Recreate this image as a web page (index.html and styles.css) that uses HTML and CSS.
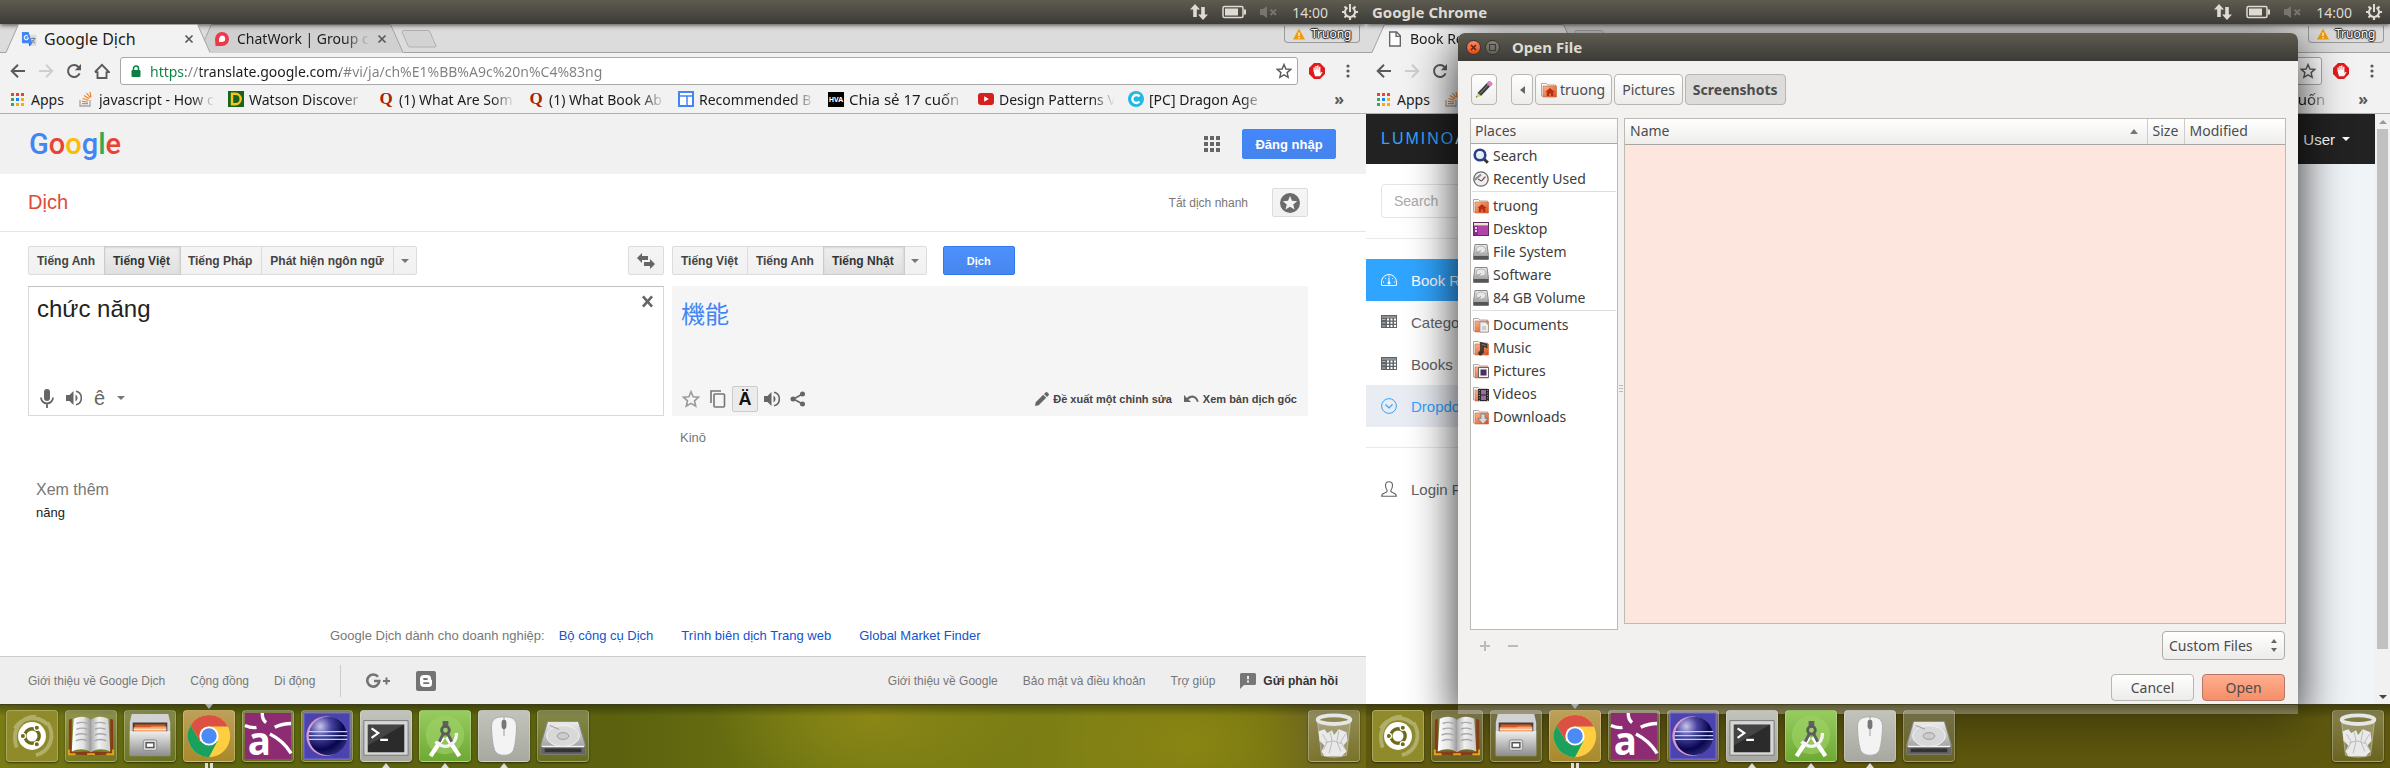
FILE: index.html
```html
<!DOCTYPE html>
<html lang="vi">
<head>
<meta charset="utf-8">
<title>Desktop</title>
<link rel="stylesheet" href="styles.css">
</head>
<body>
<svg class="defs" aria-hidden="true">
  <defs>
    <linearGradient id="metal" x1="0" y1="0" x2="0" y2="1"><stop offset="0" stop-color="#eee"/><stop offset="1" stop-color="#8c8c8c"/></linearGradient>
    <linearGradient id="orange" x1="0" y1="0" x2="1" y2="1"><stop offset="0" stop-color="#f9b98c"/><stop offset="1" stop-color="#d8481c"/></linearGradient>
    <linearGradient id="page-l" x1="0" x2="1"><stop offset="0" stop-color="#fff"/><stop offset=".6" stop-color="#e2e2e2"/><stop offset="1" stop-color="#999"/></linearGradient>
    <linearGradient id="page-r" x1="0" x2="1"><stop offset="0" stop-color="#aaa"/><stop offset=".4" stop-color="#f1f1f1"/><stop offset="1" stop-color="#ccc"/></linearGradient>
    <radialGradient id="globe" cx=".3" cy=".25" r=".8"><stop offset="0" stop-color="#c9c6ee"/><stop offset=".35" stop-color="#4a45a0"/><stop offset=".75" stop-color="#08064e"/><stop offset="1" stop-color="#2b2774"/></radialGradient>
  </defs>

  <symbol id="i-net" viewBox="0 0 18 18"><path d="M5 1L0 6.500h3.200V14h3.600V6.500H10zM13 17l5-5.500h-3.200V4h-3.600v7.500H8z" fill="#dfdbd2"/></symbol>
  <symbol id="i-battery" viewBox="0 0 24 14"><rect x="1" y="1.500" width="20" height="11" rx="1.500" fill="none" stroke="#dfdbd2" stroke-width="1.500"/><path d="M3 3.500h13v7H3zM22 4.500h2v5h-2z" fill="#dfdbd2"/></symbol>
  <symbol id="i-mute" viewBox="0 0 18 14"><path d="M0 4h3l4-3v12l-4-3H0z" fill="#77756d"/><path d="M10.500 4.500l5.500 5.500M16 4.500L10.500 10" stroke="#77756d" stroke-width="1.800"/></symbol>
  <symbol id="i-gear" viewBox="0 0 16 16"><g stroke="#dfdbd2" fill="none"><path d="M5.500 3.700a5 5 0 1 0 5 0" stroke-width="2"/><path d="M8 0v8" stroke-width="2"/><path d="M2.500 2.500l2 2M13.500 2.500l-2 2M0 8h3M13 8h3M2.500 13.500l2-2M13.500 13.500l-2-2M8 13v3" stroke-width="2.200"/></g></symbol>
  <symbol id="i-back" viewBox="0 0 16 16"><path d="M15 8H2M8 1.700L1.700 8 8 14.300" fill="none" stroke="currentColor" stroke-width="2"/></symbol>
  <symbol id="i-fwd" viewBox="0 0 16 16"><path d="M1 8h13M8 1.700L14.300 8 8 14.300" fill="none" stroke="currentColor" stroke-width="2"/></symbol>
  <symbol id="i-reload" viewBox="0 0 16 16"><path d="M13.600 10.300A6 6 0 1 1 12.500 4" fill="none" stroke="currentColor" stroke-width="2"/><path d="M15 1v6.200H8.800z" fill="currentColor"/></symbol>
  <symbol id="i-home" viewBox="0 0 16 16"><path d="M3.500 8.500V15h9V8.500M1 9L8 1.800 15 9h-2.500M1 9h2.500" fill="none" stroke="currentColor" stroke-width="1.900"/></symbol>
  <symbol id="i-lock" viewBox="0 0 10 12"><rect x="0.500" y="5" width="9" height="7" rx="1" fill="#0b8043"/><path d="M2.500 5.500V3.500a2.500 2.500 0 0 1 5 0v2" fill="none" stroke="#0b8043" stroke-width="1.500"/></symbol>
  <symbol id="i-star" viewBox="0 0 16 16"><path d="M8 1.500l1.900 4.500 4.900.4-3.700 3.200 1.100 4.800L8 11.900l-4.200 2.500 1.100-4.800L1.200 6.400 6.100 6z" fill="none" stroke="currentColor" stroke-width="1.400"/></symbol>
  <symbol id="i-adblock" viewBox="0 0 16 16"><path d="M5 0h6l5 5v6l-5 5H5l-5-5V5z" fill="#df1c1c"/><path d="M4.500 8V4.500h1.300V7h.5V3h1.400v3.500h.5V2.600h1.400v4h.5V3.800h1.300V10l1.300-1.300.8.6-2.500 4H6z" fill="#fff"/></symbol>
  <symbol id="i-dots" viewBox="0 0 4 14"><circle cx="2" cy="2" r="1.600" fill="#5a5a5a"/><circle cx="2" cy="7" r="1.600" fill="#5a5a5a"/><circle cx="2" cy="12" r="1.600" fill="#5a5a5a"/></symbol>
  <symbol id="i-warn" viewBox="0 0 12 11"><path d="M6 0l6 11H0z" fill="#f59b0b"/><path d="M6 4v3.500M6 8.500V10" stroke="#fff" stroke-width="1.300"/></symbol>
  <symbol id="i-close" viewBox="0 0 10 10"><path d="M1.500 1.500l7 7M8.500 1.500l-7 7" stroke="#5a5a5a" stroke-width="1.700"/></symbol>
  <symbol id="i-clear" viewBox="0 0 10 10"><path d="M1.500 1l7 8M8.500 1l-7 8" stroke="#666" stroke-width="2"/></symbol>
  <symbol id="i-apps" viewBox="0 0 13 13"><path d="M0 0h3v3H0zM5 0h3v3H5zM10 0h3v3h-3z" fill="#ea4335"/><path d="M0 5h3v3H0zM0 10h3v3H0z" fill="#34a853"/><path d="M5 5h3v3H5z" fill="#1a85f0"/><path d="M10 5h3v3h-3zM5 10h3v3H5zM10 10h3v3h-3z" fill="#fbab04"/></symbol>
  <symbol id="i-stack" viewBox="0 0 16 16"><path d="M2 9v6h10V9" fill="none" stroke="#9fa6ad" stroke-width="1.300"/><path d="M4 12.700h6M4 10.300l6 .7M4.600 7.500l5.800 1.800M6 4.500l5 3.300M8.500 2l3.700 4.700M12 .8l1 5.500" stroke="#f48024" stroke-width="1.200"/></symbol>
  <symbol id="i-watson" viewBox="0 0 16 16"><path d="M0 0h16v16H0z" fill="#18641f"/><path d="M4 2.800h3.500a5.200 5.200 0 0 1 0 10.400H4z" fill="none" stroke="#f5c518" stroke-width="2.400"/></symbol>
  <symbol id="i-reco" viewBox="0 0 16 16"><rect x="1" y="1" width="14" height="14" fill="#fff" stroke="#4285f4" stroke-width="2"/><path d="M1 5h14M9 5v10" stroke="#4285f4" stroke-width="1.500"/></symbol>
  <symbol id="i-yt" viewBox="0 0 16 16"><rect y="2" width="16" height="12" rx="3" fill="#d5201f"/><path d="M6.200 5.300v5.400L10.800 8z" fill="#fff"/></symbol>
  <symbol id="i-c" viewBox="0 0 16 16"><circle cx="8" cy="8" r="8" fill="#1fb9e4"/><path d="M11.500 5.500a4 4 0 1 0 0 5" fill="none" stroke="#fff" stroke-width="2.300"/></symbol>
  <symbol id="i-gt" viewBox="0 0 17 17"><path d="M6 4h9.500a1 1 0 0 1 1 1v10a1 1 0 0 1-1 1H9z" fill="#dcdcdc"/><path d="M1 1h7l4 12H2a1 1 0 0 1-1-1z" fill="#4285f4"/><path d="M8 13h4l-3 3.500z" fill="#3367d6"/><path d="M7.300 5.600a2.200 2.200 0 1 0 .5 1.800H6" fill="none" stroke="#fff" stroke-width="1.100"/><path d="M10.500 8h5M13 7v1M14.500 8c-.5 2-1.500 3.500-3 4.500M11.500 9.500c.7 1.500 2 2.700 3.500 3.300" stroke="#607d9b" fill="none"/></symbol>
  <symbol id="i-cw" viewBox="0 0 16 16"><path d="M1 8a7 7 0 1 1 7 7H1.500z" fill="#f03748"/><path d="M5 11c-.5-5 1.500-6.500 3.500-6.500a3.300 3.300 0 0 1 0 6.500z" fill="#fff"/></symbol>
  <symbol id="i-page" viewBox="0 0 12 15"><path d="M1 1h6.500L11 4.500V14H1zM7 1v4h4" fill="#fff" stroke="#666" stroke-width="1.300"/></symbol>
  <symbol id="i-tab" viewBox="0 0 206 29" preserveAspectRatio="none"><path d="M0 28.500H1L13 1.500Q13.500.5 14.500.5H191.500Q192.500.5 193 1.500L205 28.500H206V29H0z" fill="currentColor"/><path d="M0 28.500H1L13 1.500Q13.500.5 14.500.5H191.500Q192.500.5 193 1.500L205 28.500" fill="none" stroke="#a3a3a3"/></symbol>
  <symbol id="i-newtab" viewBox="0 0 36 18"><path d="M3 .5h24q1.500 0 2 1.500l6 14q.3 1-1 1H9q-1.500 0-2-1.500L1 2Q.7.5 3 .5z" fill="#d3d3d3" stroke="#b0b0b0"/></symbol>

  <symbol id="i-grid" viewBox="0 0 16 16"><path d="M0 0h4v4H0zM6 0h4v4H6zM12 0h4v4h-4zM0 6h4v4H0zM6 6h4v4H6zM12 6h4v4h-4zM0 12h4v4H0zM6 12h4v4H6zM12 12h4v4h-4z" fill="#666"/></symbol>
  <symbol id="i-stardisc" viewBox="0 0 20 20"><circle cx="10" cy="10" r="10" fill="#6b6b6b"/><path d="M10 3l2 4.800 5.200.4-4 3.400 1.300 5L10 13.800l-4.500 2.800 1.300-5-4-3.400L8 7.800z" fill="#f3f3f3"/></symbol>
  <symbol id="i-swap" viewBox="0 0 18 16"><path d="M0 5l5-5v3h6v4H5v3z" fill="#666"/><path d="M18 11l-5 5v-3H7V9h6V6z" fill="#666"/></symbol>
  <symbol id="i-mic" viewBox="0 0 14 19"><rect x="4" y="0" width="6" height="12" rx="3" fill="#666"/><path d="M1 8.500a6 6 0 0 0 12 0M7 14.500V19" fill="none" stroke="#666" stroke-width="1.800"/></symbol>
  <symbol id="i-speaker" viewBox="0 0 16 16"><path d="M0 5h3.500L7.500 1v14l-4-4H0z" fill="#666"/><path d="M9.500 4.500v7a4 4 0 0 0 0-7z" fill="#666"/><path d="M10 1.200a7 7 0 0 1 0 13.600" fill="none" stroke="#666" stroke-width="1.600"/></symbol>
  <symbol id="i-copy" viewBox="0 0 16 18"><path d="M1 13V1h10" fill="none" stroke="#757575" stroke-width="1.600"/><rect x="4" y="4" width="10.500" height="13" rx="1" fill="none" stroke="#757575" stroke-width="1.600"/></symbol>
  <symbol id="i-share" viewBox="0 0 16 16"><path d="M12.500 3L3.500 8l9 5" fill="none" stroke="#666" stroke-width="1.600"/><circle cx="12.500" cy="3" r="2.500" fill="#666"/><circle cx="3" cy="8" r="2.500" fill="#666"/><circle cx="12.500" cy="13" r="2.500" fill="#666"/></symbol>
  <symbol id="i-pencil" viewBox="0 0 14 14"><path d="M0 14l.7-3.700 7.500-7.500 3 3L3.700 13.300zM9 2l1.500-1.500a1.500 1.500 0 0 1 2 0l1 1a1.500 1.500 0 0 1 0 2L12 5z" fill="#666"/></symbol>
  <symbol id="i-undo" viewBox="0 0 15 10"><path d="M0 1v7h7L4.500 5.500C8 2.500 11.500 3.500 13 8l1.800-.6C13 1.500 7.500-.5 3 4z" fill="#666"/></symbol>
  <symbol id="i-caret" viewBox="0 0 8 4"><path d="M0 0h8L4 4z" fill="currentColor"/></symbol>
  <symbol id="i-gplus" viewBox="0 0 24 16"><path d="M12 3.800A6 6 0 1 0 13.300 8H8" fill="none" stroke="#737373" stroke-width="2.600"/><path d="M20.500 4.500v7M17 8h7" stroke="#737373" stroke-width="2"/></symbol>
  <symbol id="i-blogger" viewBox="0 0 20 20"><rect width="20" height="20" rx="2" fill="#737373"/><path d="M8 4h3.500A3.500 3.500 0 0 1 15 7.500c0 1 .3 1.300 1 1.500v3.500A3.500 3.500 0 0 1 12.500 16H8a4 4 0 0 1-4-4V8a4 4 0 0 1 4-4z" fill="#fff"/><path d="M8 8h3M8 12.200h4.500" stroke="#737373" stroke-width="1.800" stroke-linecap="round"/></symbol>
  <symbol id="i-feedback" viewBox="0 0 16 16"><path d="M1.500 0h13A1.500 1.500 0 0 1 16 1.500v9A1.500 1.500 0 0 1 14.500 12H4l-4 4V1.500A1.500 1.500 0 0 1 1.500 0z" fill="#777"/><path d="M8 3v3.200M8 7.500v2" stroke="#eee" stroke-width="2"/></symbol>

  <symbol id="i-dash" viewBox="0 0 16 12"><path d="M1 11.500h14a.5.5 0 0 0 .5-.5V8a7.500 7.500 0 0 0-15 0v3a.5.5 0 0 0 .5.500z" fill="none" stroke="#fff"/><path d="M8 3.500V10M3 8H2M14 8h-1M4 4l.8.800M12 4l-.8.800M8 2.500V1.500" stroke="#fff"/><circle cx="8" cy="9" r="1.500" fill="#fff"/></symbol>
  <symbol id="i-table" viewBox="0 0 16 14"><path d="M0 0h16v13H0z" fill="#5f6468"/><path d="M6 3.500h2v2H6zM9.500 3.500h2v2h-2zM13 3.500h2v2h-2zM6 6.800h2v2H6zM9.500 6.800h2v2h-2zM13 6.800h2v2h-2zM6 10h2v2H6zM9.500 10h2v2h-2zM13 10h2v2h-2z" fill="#fff"/><path d="M1 4.500h3.500M1 7.800h3.500M1 11h3.500M1 2h14" stroke="#b8bbbd"/></symbol>
  <symbol id="i-down" viewBox="0 0 16 16"><circle cx="8" cy="8" r="7.400" fill="none" stroke="#30a5ff"/><path d="M4.500 6.500L8 10l3.500-3.500" fill="none" stroke="#30a5ff" stroke-width="1.200"/></symbol>
  <symbol id="i-user" viewBox="0 0 16 16"><path d="M8 .7c-2.500 0-3.500 1.700-3.500 3.500 0 2 .5 3.500 1.500 4.800.5 1.500 0 2-1.500 2.500C2 12.300.7 12.500.7 15.300h14.600c0-2.800-1.300-3-3.800-3.800C10 11 9.500 10.500 10 9c1-1.300 1.500-2.800 1.500-4.800C11.500 2.400 10.500.7 8 .7z" fill="#fff" stroke="#5f6468" stroke-width="1.100"/></symbol>

  <symbol id="i-folder" viewBox="0 0 16 16"><path d="M.5 14V1.500h5L7 3h7.500v11z" fill="#fafafa" stroke="#aaa"/><path d="M2 4h13.500v11H2z" fill="url(#orange)" stroke="#c9683c" stroke-width=".6"/></symbol>
  <symbol id="f-home" viewBox="0 0 16 16"><use href="#i-folder"/><path d="M9 6L4.500 10h1.300v4h2.300v-2.500h1.800V14h2.300v-4h1.300z" fill="#b92d0f"/></symbol>
  <symbol id="f-docs" viewBox="0 0 16 16"><use href="#i-folder"/><path d="M7 5h5.500l3 3v7H7z" fill="#eee" stroke="#999" stroke-width=".8"/><path d="M9 10h4M9 12h4" stroke="#aaa"/></symbol>
  <symbol id="f-music" viewBox="0 0 16 16"><use href="#i-folder"/><path d="M8 12.500V3l5.500 1.500V7L10 6v7" fill="none" stroke="#3a3633" stroke-width="1.800"/><circle cx="7.500" cy="13.300" r="2.200" fill="#3a3633"/></symbol>
  <symbol id="f-pics" viewBox="0 0 16 16"><use href="#i-folder"/><path d="M5.500 4.500h10v10h-10z" fill="#f5f5f5" stroke="#666"/><path d="M7.500 6.500h6v6h-6z" fill="#49305c"/></symbol>
  <symbol id="f-video" viewBox="0 0 16 16"><use href="#i-folder"/><path d="M5 3h11v12H5z" fill="#2d2628"/><path d="M8 4h5v4.500H8zM8 9.500h5V14H8z" fill="#9c6aa5"/><path d="M6.300 4v11M14.700 4v11" stroke="#aaa" stroke-dasharray="1 1.500"/></symbol>
  <symbol id="f-down" viewBox="0 0 16 16"><use href="#i-folder"/><path d="M8 5h4v4.500h3L10 15 5 9.500h3z" fill="#d8d8d8" stroke="#777" stroke-width=".7"/></symbol>
  <symbol id="f-search" viewBox="0 0 16 16"><path d="M10.500 10.500l4.300 4.300" stroke="#333" stroke-width="3"/><circle cx="7" cy="7" r="5.300" fill="#e5ecfa" stroke="#2b3f8c" stroke-width="2.600"/><path d="M5 4.500h3" stroke="#fff" stroke-width="1.500"/></symbol>
  <symbol id="f-recent" viewBox="0 0 16 16"><circle cx="8" cy="8" r="7.200" fill="#eee" stroke="#6a6a6a" stroke-width="1.300"/><path d="M1.500 9L8 3.500" stroke="#888" stroke-width="2"/><path d="M5 8l3.500 2L12 5.500" fill="none" stroke="#333"/><path d="M8.500 10l4-4" stroke="#c33"/></symbol>
  <symbol id="f-desktop" viewBox="0 0 16 14"><rect x=".5" y=".5" width="15" height="13" fill="#8e2a90" stroke="#5d3157"/><path d="M1 1h14v2.500H1z" fill="#ece6ce"/><path d="M5 4h10v9H5z" fill="#b044a8"/><path d="M2 5h2v2H2zM2 8h2v2H2z" fill="#e7d6e7"/></symbol>
  <symbol id="f-drive" viewBox="0 0 16 16"><path d="M2 .5h12l1.500 11v4H.5v-4z" fill="url(#metal)" stroke="#888"/><path d="M.7 12h14.600v3.300H.7z" fill="#555"/><ellipse cx="8" cy="5.500" rx="4.500" ry="3.500" fill="#e8e8e8" stroke="#aaa" stroke-width=".8"/><path d="M3 9.500l5-3" stroke="#999"/></symbol>
  <symbol id="f-edit" viewBox="0 0 18 18"><path d="M2.500 12l9-9.500 3.500 3-9 9.500z" fill="#3d3d3d"/><path d="M5 12.500l8-8.500" stroke="#8b8b8b"/><path d="M2.500 12L1 16.500 6 15z" fill="#ecd34b"/><path d="M1.500 15L1 16.500l1.500-.4z" fill="#222"/><path d="M11.500 2.500l2-1.800c1.500-1 4.300 1.300 3.300 3L15 5.500z" fill="#df83c4" stroke="#9e5d8b" stroke-width=".6"/></symbol>
  <symbol id="i-sort" viewBox="0 0 8 5"><path d="M4 0l4 5H0z" fill="#777"/></symbol>

  <symbol id="d-ubuntu" viewBox="0 0 52 52"><path d="M10 38C4 20 14 6 30 6M42 12c9 14 3 30-12 34M8 18c8-12 24-14 34-4" fill="none" stroke="#fff" stroke-opacity=".3" stroke-width="4"/><circle cx="26" cy="26" r="14.500" fill="#fff"/><circle cx="26" cy="26" r="7.500" fill="none" stroke="#6f6a18" stroke-width="3.500"/><g fill="#6f6a18" stroke="#fff" stroke-width="1.200"><circle cx="16.500" cy="26" r="2.700"/><circle cx="31" cy="17.500" r="2.700"/><circle cx="31" cy="34.500" r="2.700"/></g></symbol>
  <symbol id="d-book" viewBox="0 0 52 52"><path d="M3 9l3-1v35l20-1 20 1V8l3 1v36l-20 1q-3 2-6 0L3 45z" fill="#863d16"/><path d="M3 40v5h7M49 40v5h-7M22 45h8" fill="none" stroke="#e5a51b" stroke-width="2"/><path d="M8 8c6-3 13-3 18 1v34c-5-4-13-4-20-1z" fill="url(#page-l)"/><path d="M44 8c-6-3-13-3-18 1v34c5-4 13-4 20-1z" fill="url(#page-r)"/><path d="M11 13c4-1.500 8-1.500 11 0M11 19c4-1.500 8-1.500 11 0M10 25c4-1.500 9-1.500 12 0M10 31c4-1.500 9-1.500 12 0M30 13c3-1.500 7-1.500 11 0M30 19c3-1.500 7-1.500 11 0M30 25c3-1.500 8-1.500 12 0M30 31c3-1.500 8-1.500 12 0" fill="none" stroke="#a9a9a9" stroke-width="1.500"/></symbol>
  <symbol id="d-files" viewBox="0 0 52 52"><path d="M7 3h38l2 9v34H5V12z" fill="#d2d2d2"/><path d="M8 12h36v10H8z" fill="#3f3f3f"/><path d="M10 14h32v8H10z" fill="#d8581e"/><path d="M9 17h17l2-1h15v5H9z" fill="#f3a56d"/><path d="M9 19h34" stroke="#fff4e4"/><path d="M5 21h42v26H5z" fill="url(#metal)"/><rect x="19" y="30" width="14" height="11" rx="2" fill="#ddd" stroke="#888"/><rect x="22" y="33" width="8" height="5" fill="#fff" stroke="#555" stroke-width="1.500"/></symbol>
  <symbol id="d-chrome" viewBox="0 0 52 52"><circle cx="26" cy="26" r="22" fill="#ffcd40"/><path d="M16.500 31.500L6.900 15A22 22 0 0 1 45.500 16H26a10 10 0 0 0-9.500 7z" fill="#dd5144"/><path d="M16.500 31.500L6.900 15A22 22 0 0 0 26 48l9-17z" fill="#1aa15e"/><circle cx="26" cy="26" r="10" fill="#fff"/><circle cx="26" cy="26" r="8" fill="#4c8bf5"/></symbol>
  <symbol id="d-astah" viewBox="0 0 52 52"><path d="M2 2h48v48H2z" fill="#8d2b73"/><path d="M20 2q0 7 4 10M2 15q7 3 12 2M33 17q8-4 17-4M28 24q14 7 22 20" fill="none" stroke="#fff" stroke-width="3.500"/><text x="5" y="46" font-family="Open Sans, sans-serif" font-weight="700" font-size="40" fill="#fff">a</text></symbol>
  <symbol id="d-eclipse" viewBox="0 0 52 52"><path d="M2 2h48v48H2z" fill="#4b43ae" stroke="#8077e6"/><circle cx="25" cy="26" r="20.500" fill="#d59cca"/><circle cx="27" cy="26" r="20" fill="url(#globe)"/><path d="M7 21.500h40M7 25.500h40M7 29.500h40" stroke="#b5d9f0" stroke-width="1.300"/></symbol>
  <symbol id="d-term" viewBox="0 0 52 52"><path d="M3 10h46v36H3z" fill="#d6d6d6" stroke="#777"/><path d="M7 14h38v29H7z" fill="#2b2b2b"/><path d="M7 14h38L7 36z" fill="#fff" fill-opacity=".12"/><path d="M11 18l7 5-7 5M20 30h8" fill="none" stroke="#fff" stroke-width="2.200"/></symbol>
  <symbol id="d-astudio" viewBox="0 0 52 52"><circle cx="26" cy="25" r="20" fill="#9fd268" fill-opacity=".6"/><path d="M24 27L11 47M28 27l13 20" stroke="#fff" stroke-width="4.500"/><path d="M16 32q12 10 20-1 2-3 2-8" fill="none" stroke="#f4f4f4" stroke-width="3.500"/><path d="M25 12h3v8h-3zM24 24l-4 8M29 24l4 8" stroke="#606060" stroke-width="3"/><circle cx="26.500" cy="20" r="4" fill="#9ccf66" stroke="#5b5b5b" stroke-width="3"/></symbol>
  <symbol id="d-mouse" viewBox="0 0 52 52"><path d="M13 16c0-8 5-10 13-10s13 2 13 10c0 7-1 18-3 24-1 4-5 6-10 6s-9-2-10-6c-2-6-3-17-3-24z" fill="#f3f3f3" stroke="#aaa"/><path d="M26 6v20" stroke="#999"/><rect x="23.500" y="9" width="5" height="10" rx="2.500" fill="#777"/></symbol>
  <symbol id="d-disk" viewBox="0 0 52 52"><path d="M10 11h32l7 24v10H3V35z" fill="url(#metal)" stroke="#888"/><path d="M3 37h46v8H3z" fill="#666"/><path d="M4 37h44" stroke="#f4f4f4" stroke-width="1.500"/><ellipse cx="26" cy="26" rx="17" ry="11" fill="#d8d8d8" stroke="#f4f4f4"/><ellipse cx="26" cy="26" rx="6" ry="3.500" fill="#ccc" stroke="#999"/><path d="M12 15l10 4" stroke="#999"/><path d="M7 41h38" stroke="#333" stroke-width="4"/></symbol>
  <symbol id="d-trash" viewBox="0 0 52 52"><path d="M9 12l4 34q13 4 26 0l4-34z" fill="#fff" fill-opacity=".22" stroke="#ddd" stroke-opacity=".5"/><ellipse cx="26" cy="9" rx="17" ry="4.500" fill="none" stroke="#e6e6e6" stroke-width="4"/><path d="M10 21l6-2 3 4 5-3 2 5 5-6 8 3 1 9-4 5 3 6-5 5H16l-3-5 3-6-5-5z" fill="#e9e9e9"/><path d="M14 24l5 8-4 8M22 22l2 9-3 13M31 21l-2 11 4 10M38 24l-5 8 5 8M17 33l8-2 9 3" fill="none" stroke="#b9b9b9"/></symbol>
</svg>

<main class="desktop">
  <section class="screen screen-left">
    <header class="panel">
      <div class="indicators">
        <svg class="i18"><use href="#i-net"/></svg><svg class="bat"><use href="#i-battery"/></svg><svg class="mute"><use href="#i-mute"/></svg><span>14:00</span><svg class="i16"><use href="#i-gear"/></svg>
      </div>
    </header>
    <div class="browser">
      <div class="tabstrip">
        <div class="tab tab-idle tab-second"><svg class="tab-shape"><use href="#i-tab"/></svg><svg class="i16"><use href="#i-cw"/></svg><span class="tab-title">ChatWork | Group c</span><button class="plain" aria-label="Close tab"><svg class="i10"><use href="#i-close"/></svg></button></div>
        <div class="tab tab-first"><svg class="tab-shape"><use href="#i-tab"/></svg><svg class="i16"><use href="#i-gt"/></svg><span class="tab-title tab-large">Google Dịch</span><button class="plain" aria-label="Close tab"><svg class="i10"><use href="#i-close"/></svg></button></div>
        <button class="plain newtab" aria-label="New tab"><svg><use href="#i-newtab"/></svg></button>
        <button class="profile"><svg class="i12"><use href="#i-warn"/></svg>Truong</button>
      </div>
      <div class="toolbar">
        <button class="plain" aria-label="Back"><svg class="i16"><use href="#i-back"/></svg></button>
        <button class="plain dim" aria-label="Forward"><svg class="i16"><use href="#i-fwd"/></svg></button>
        <button class="plain" aria-label="Reload"><svg class="i16"><use href="#i-reload"/></svg></button>
        <button class="plain" aria-label="Home"><svg class="i16"><use href="#i-home"/></svg></button>
        <div class="omnibox"><svg class="lock"><use href="#i-lock"/></svg><input class="url" type="text" aria-label="Address" value="https://translate.google.com/#vi/ja/ch%E1%BB%A9c%20n%C4%83ng"><svg class="i16"><use href="#i-star"/></svg></div>
        <button class="plain" aria-label="AdBlock"><svg class="i16"><use href="#i-adblock"/></svg></button>
        <button class="plain menu" aria-label="Menu"><svg class="dots"><use href="#i-dots"/></svg></button>
      </div>
      <nav class="bookmarks">
        <a class="bm bm-apps" href="#"><svg class="i13"><use href="#i-apps"/></svg><span>Apps</span></a>
        <a class="bm" href="#"><svg class="i16"><use href="#i-stack"/></svg><span>javascript - How c</span></a>
        <a class="bm" href="#"><svg class="i16"><use href="#i-watson"/></svg><span>Watson Discover</span></a>
        <a class="bm" href="#"><b class="quora">Q</b><span>(1) What Are Som</span></a>
        <a class="bm" href="#"><b class="quora">Q</b><span>(1) What Book Ab</span></a>
        <a class="bm" href="#"><svg class="i16"><use href="#i-reco"/></svg><span>Recommended B</span></a>
        <a class="bm" href="#"><b class="hva">HVA</b><span class="bm-large">Chia sẻ 17 cuốn</span></a>
        <a class="bm" href="#"><svg class="i16"><use href="#i-yt"/></svg><span>Design Patterns V</span></a>
        <a class="bm" href="#"><svg class="i16"><use href="#i-c"/></svg><span>[PC] Dragon Age</span></a>
        <button class="plain more">»</button>
      </nav>

      <div class="translate">
        <header class="g-head">
          <div class="logo" aria-label="Google"><span class="gb">G</span><span class="gr">o</span><span class="gy">o</span><span class="gb">g</span><span class="gg">l</span><span class="gr">e</span></div>
          <button class="plain" aria-label="Apps"><svg class="i16"><use href="#i-grid"/></svg></button>
          <button class="signin">Đăng nhập</button>
        </header>
        <div class="g-title">
          <h1>Dịch</h1>
          <a href="#">Tắt dịch nhanh</a>
          <button class="gbtn phrasebook" aria-label="Phrasebook"><svg class="i20"><use href="#i-stardisc"/></svg></button>
        </div>
        <div class="work">
          <div class="langs">
            <div class="group"><button>Tiếng Anh</button><button class="on">Tiếng Việt</button><button>Tiếng Pháp</button><button>Phát hiện ngôn ngữ</button><button class="drop" aria-label="More"><svg class="caret"><use href="#i-caret"/></svg></button></div>
            <button class="gbtn swap" aria-label="Swap"><svg class="i18"><use href="#i-swap"/></svg></button>
          </div>
          <div class="langs">
            <div class="group"><button>Tiếng Việt</button><button>Tiếng Anh</button><button class="on">Tiếng Nhật</button><button class="drop" aria-label="More"><svg class="caret"><use href="#i-caret"/></svg></button></div>
            <button class="go">Dịch</button>
          </div>
          <div class="box source">
            <div class="box-top"><textarea aria-label="Source" spellcheck="false">chức năng</textarea><button class="plain" aria-label="Clear"><svg class="i13"><use href="#i-clear"/></svg></button></div>
            <div class="tools"><svg class="mic"><use href="#i-mic"/></svg><svg class="i16"><use href="#i-speaker"/></svg><span class="ehat">ê</span><svg class="caret"><use href="#i-caret"/></svg></div>
          </div>
          <div class="box result">
            <div class="out" lang="ja">機能</div>
            <div class="tools">
              <svg class="i18 pale"><use href="#i-star"/></svg><svg class="copy"><use href="#i-copy"/></svg><button class="adots">Ä</button><svg class="i16"><use href="#i-speaker"/></svg><svg class="i16"><use href="#i-share"/></svg>
              <span class="edits"><button class="plain"><svg class="i14"><use href="#i-pencil"/></svg>Đề xuất một chỉnh sửa</button><button class="plain"><svg class="undo"><use href="#i-undo"/></svg>Xem bản dịch gốc</button></span>
            </div>
          </div>
          <div></div>
          <div class="translit">Kinō</div>
        </div>
        <div class="see"><h2>Xem thêm</h2><a href="#">năng</a></div>
        <div class="biz"><span>Google Dịch dành cho doanh nghiệp:</span><a href="#">Bộ công cụ Dịch</a><a href="#">Trình biên dịch Trang web</a><a href="#">Global Market Finder</a></div>
        <footer class="g-foot">
          <a href="#">Giới thiệu về Google Dịch</a><a href="#">Cộng đồng</a><a href="#">Di động</a>
          <span class="social"><svg class="gplus"><use href="#i-gplus"/></svg><svg class="i20"><use href="#i-blogger"/></svg></span>
          <span class="foot-right"><a href="#">Giới thiệu về Google</a><a href="#">Bảo mật và điều khoản</a><a href="#">Trợ giúp</a><button class="plain feedback"><svg class="i16"><use href="#i-feedback"/></svg>Gửi phản hồi</button></span>
        </footer>
      </div>
    </div>
    <nav class="dock">
      <button class="tile"><svg><use href="#d-ubuntu"/></svg></button><button class="tile"><svg><use href="#d-book"/></svg></button><button class="tile"><svg><use href="#d-files"/></svg></button><button class="tile t-gold run2 here"><svg><use href="#d-chrome"/></svg></button><button class="tile"><svg><use href="#d-astah"/></svg></button><button class="tile"><svg><use href="#d-eclipse"/></svg></button><button class="tile t-grey run"><svg><use href="#d-term"/></svg></button><button class="tile t-green run"><svg><use href="#d-astudio"/></svg></button><button class="tile t-grey run"><svg><use href="#d-mouse"/></svg></button><button class="tile"><svg><use href="#d-disk"/></svg></button><button class="tile last"><svg><use href="#d-trash"/></svg></button>
    </nav>
  </section>

  <section class="screen screen-right">
    <header class="panel">
      <strong>Google Chrome</strong>
      <div class="indicators">
        <svg class="i18"><use href="#i-net"/></svg><svg class="bat"><use href="#i-battery"/></svg><svg class="mute"><use href="#i-mute"/></svg><span>14:00</span><svg class="i16"><use href="#i-gear"/></svg>
      </div>
    </header>
    <div class="browser">
      <div class="tabstrip">
        <div class="tab tab-first"><svg class="tab-shape"><use href="#i-tab"/></svg><svg class="i16"><use href="#i-page"/></svg><span class="tab-title">Book Reviews</span></div>
        <button class="plain newtab" aria-label="New tab"><svg><use href="#i-newtab"/></svg></button>
        <button class="profile"><svg class="i12"><use href="#i-warn"/></svg>Truong</button>
      </div>
      <div class="toolbar">
        <button class="plain" aria-label="Back"><svg class="i16"><use href="#i-back"/></svg></button>
        <button class="plain dim" aria-label="Forward"><svg class="i16"><use href="#i-fwd"/></svg></button>
        <button class="plain" aria-label="Reload"><svg class="i16"><use href="#i-reload"/></svg></button>
        <button class="plain" aria-label="Home"><svg class="i16"><use href="#i-home"/></svg></button>
        <div class="omnibox"><input class="url" type="text" aria-label="Address"><svg class="i16"><use href="#i-star"/></svg></div>
        <button class="plain" aria-label="AdBlock"><svg class="i16"><use href="#i-adblock"/></svg></button>
        <button class="plain menu" aria-label="Menu"><svg class="dots"><use href="#i-dots"/></svg></button>
      </div>
      <nav class="bookmarks">
        <a class="bm bm-apps" href="#"><svg class="i13"><use href="#i-apps"/></svg><span>Apps</span></a>
        <a class="bm" href="#"><svg class="i16"><use href="#i-stack"/></svg></a>
        <span class="bm"></span><span class="bm"></span><span class="bm"></span><span class="bm"></span>
        <a class="bm" href="#"><b class="hva">HVA</b><span class="bm-large">Chia sẻ 17 cuốn</span></a>
        <button class="plain more">»</button>
      </nav>
      <div class="admin">
        <div class="admin-main">
          <header class="navbar"><span class="brand"><b>LUMINO</b>ADMIN</span><button class="plain usermenu">User <svg class="caret"><use href="#i-caret"/></svg></button></header>
          <div class="admin-body">
            <aside>
              <input class="side-search" type="text" placeholder="Search" aria-label="Search">
              <ul>
                <li><a class="active" href="#"><svg class="i16"><use href="#i-dash"/></svg>Book Reviews</a></li>
                <li><a href="#"><svg class="i16"><use href="#i-table"/></svg>Categories</a></li>
                <li><a href="#"><svg class="i16"><use href="#i-table"/></svg>Books</a></li>
                <li><a class="open" href="#"><svg class="i16"><use href="#i-down"/></svg>Dropdown</a></li>
              </ul>
              <ul>
                <li><a href="#"><svg class="i16"><use href="#i-user"/></svg>Login Page</a></li>
              </ul>
            </aside>
          </div>
        </div>
        <div class="scrollbar"><svg class="caret up"><use href="#i-caret"/></svg><span class="thumb"></span><svg class="caret"><use href="#i-caret"/></svg></div>
      </div>
    </div>

    <div class="dialog" role="dialog" aria-label="Open File">
      <header class="titlebar"><button class="wm wm-close" aria-label="Close"><svg><path d="M1 1l5 5M6 1L1 6" stroke="#5c1f0c" stroke-width="1.400"/></svg></button><button class="wm" aria-label="Maximize"><svg><path d="M.5.5h6v6h-6z" fill="none" stroke="#3a3935" stroke-width="1.200"/></svg></button><strong>Open File</strong></header>
      <div class="d-body">
        <div class="path">
          <button class="gtk edit" aria-label="Type a file name"><svg class="i18"><use href="#f-edit"/></svg></button>
          <button class="gtk prev" aria-label="Back"><svg class="tri"><path d="M5 0v8L0 4z" fill="#666"/></svg></button>
          <button class="gtk home"><svg class="i16"><use href="#f-home"/></svg>truong</button>
          <button class="gtk">Pictures</button>
          <button class="gtk pressed">Screenshots</button>
        </div>
        <div class="panes">
          <div class="places-col">
            <div class="places">
              <div class="th">Places</div>
              <ul>
                <li><svg class="i16"><use href="#f-search"/></svg>Search</li>
                <li><svg class="i16"><use href="#f-recent"/></svg>Recently Used</li>
              </ul>
              <ul>
                <li><svg class="i16"><use href="#f-home"/></svg>truong</li>
                <li><svg class="i16"><use href="#f-desktop"/></svg>Desktop</li>
                <li><svg class="i16"><use href="#f-drive"/></svg>File System</li>
                <li><svg class="i16"><use href="#f-drive"/></svg>Software</li>
                <li><svg class="i16"><use href="#f-drive"/></svg>84 GB Volume</li>
              </ul>
              <ul>
                <li><svg class="i16"><use href="#f-docs"/></svg>Documents</li>
                <li><svg class="i16"><use href="#f-music"/></svg>Music</li>
                <li><svg class="i16"><use href="#f-pics"/></svg>Pictures</li>
                <li><svg class="i16"><use href="#f-video"/></svg>Videos</li>
                <li><svg class="i16"><use href="#f-down"/></svg>Downloads</li>
              </ul>
            </div>
            <div class="addrow"><button class="plain" aria-label="Add"><svg class="i10"><path d="M5 0v10M0 5h10" stroke="#bbb" stroke-width="2"/></svg></button><button class="plain" aria-label="Remove"><svg class="i10"><path d="M0 5h10" stroke="#bbb" stroke-width="2"/></svg></button></div>
          </div>
          <div class="grip"><i></i><i></i><i></i></div>
          <div class="files-col">
            <div class="files">
              <table><thead><tr><th class="c-name"><span>Name<svg class="sort"><use href="#i-sort"/></svg></span></th><th class="c-size">Size</th><th class="c-mod">Modified</th></tr></thead></table>
            </div>
            <div class="filter"><select aria-label="Filter"><option>Custom Files</option></select><svg class="updown"><path d="M0 4l3-4 3 4zM0 9h6l-3 4z" fill="#666"/></svg></div>
          </div>
        </div>
        <div class="actions"><button class="gtk">Cancel</button><button class="gtk primary">Open</button></div>
      </div>
    </div>

    <nav class="dock">
      <button class="tile"><svg><use href="#d-ubuntu"/></svg></button><button class="tile"><svg><use href="#d-book"/></svg></button><button class="tile"><svg><use href="#d-files"/></svg></button><button class="tile t-gold run2 here"><svg><use href="#d-chrome"/></svg></button><button class="tile"><svg><use href="#d-astah"/></svg></button><button class="tile"><svg><use href="#d-eclipse"/></svg></button><button class="tile t-grey run"><svg><use href="#d-term"/></svg></button><button class="tile t-green run"><svg><use href="#d-astudio"/></svg></button><button class="tile t-grey run"><svg><use href="#d-mouse"/></svg></button><button class="tile"><svg><use href="#d-disk"/></svg></button><button class="tile last"><svg><use href="#d-trash"/></svg></button>
    </nav>
  </section>
</main>
</body>
</html>
```

FILE: styles.css
```css
* { box-sizing: border-box; }
body { margin: 0; font-family: "Noto Sans", "Open Sans", sans-serif; font-size: 14px; color: #1c1c1c; }
a { color: inherit; text-decoration: none; }
ul { list-style: none; margin: 0; padding: 0; }
h1, h2 { margin: 0; font-weight: 400; }
button, input, select, textarea { font: inherit; color: inherit; }
svg { display: block; flex: none; }
.defs { position: absolute; width: 0; height: 0; }
.plain { border: 0; background: none; padding: 0; display: flex; align-items: center; }
.i10 { width: 10px; height: 10px; }
.i12 { width: 12px; height: 12px; }
.i13 { width: 13px; height: 13px; }
.i14 { width: 14px; height: 14px; }
.i16 { width: 16px; height: 16px; }
.i18 { width: 18px; height: 18px; }
.i20 { width: 20px; height: 20px; }
.caret { width: 8px; height: 4px; }

.desktop { display: flex; min-height: 100vh; }
.screen { display: flex; flex-direction: column; min-width: 0; position: relative; overflow: hidden; }
.screen-left { flex: 1366 1 0; }
.screen-right { flex: 1024 1 0; background: #6a670a; }

/* Top panel */
.panel { display: flex; align-items: center; height: 24px; padding: 0 8px 0 6px; background: linear-gradient(#5e5b50, #3c3b37); color: #dfdbd2; box-shadow: 0 1px 5px rgba(0, 0, 0, .7); position: relative; z-index: 1; }
.panel strong { font-size: 15px; }
.indicators { display: flex; align-items: center; gap: 14px; margin-left: auto; }
.bat { width: 24px; height: 14px; }
.mute { width: 18px; height: 14px; }

/* Browser frame */
.browser { flex: 1; display: flex; flex-direction: column; }
.tabstrip { display: flex; height: 29px; padding: 0 6px 0 5px; background: #dcdcdc; box-shadow: inset 0 -1px #a3a3a3; }
.tab { position: relative; display: flex; align-items: center; gap: 7px; width: 206px; padding: 0 17px 0 16px; color: #f2f2f2; }
.tab-first { order: 1; }
.tab-second { order: 2; margin-left: -13px; }
.tab-second + .tab-first { z-index: 1; }
.tab-idle { color: #d0d0d0; }
.tab-shape { position: absolute; inset: 0; width: 100%; height: 100%; }
.tab > :not(.tab-shape) { position: relative; }
.tab-title { flex: 1; min-width: 0; overflow: hidden; white-space: nowrap; color: #1c1c1c; mask-image: linear-gradient(to right, #000 80%, transparent); }
.tab-large { font-size: 16px; mask-image: none; }
.newtab { order: 3; width: 36px; margin-left: -3px; }
.newtab svg { width: 36px; height: 18px; }
.profile { order: 4; display: flex; align-items: center; gap: 6px; margin: 2px 0 0 auto; width: 76px; height: 17px; padding: 0 8px; border: 1px solid #999; border-top: 0; border-radius: 0 0 4px 4px; background: none; font-size: 12px; line-height: 16px; color: #fff; text-shadow: 0 0 1px #222, 1px 0 1px #222, -1px 0 1px #222, 0 1px 1px #222, 0 -1px 1px #222; }
.toolbar { display: flex; align-items: center; gap: 12px; padding: 4px 16px 0 10px; background: #f2f2f2; color: #5a5a5a; }
.dim { color: #cfcfcf; }
.omnibox { flex: 1; display: flex; align-items: center; gap: 9px; height: 28px; padding: 0 5px 0 10px; margin: 0 -1px 0 -2px; border: 1px solid #a8a8a8; border-radius: 3px; background: #fff; }
.lock { width: 10px; height: 14px; }
.url { flex: 1; min-width: 0; border: 0; padding: 0; outline: 0; -webkit-text-fill-color: transparent; background: linear-gradient(to right, #0b8043 36px, #808080 36px 50px, #1c1c1c 50px 190px, #808080 190px) text; }
.menu { margin-left: 9px; }
.dots { width: 4px; height: 14px; }
.bookmarks { display: flex; align-items: center; height: 29px; padding: 0 22px 0 11px; background: #f2f2f2; border-bottom: 1px solid #b0b0b0; white-space: nowrap; }
.bm { display: flex; align-items: center; gap: 5px; flex: 0 1 150px; min-width: 0; padding-right: 13px; }
.bm-apps { flex: 0 0 67px; gap: 7px; padding: 0; }
.bm span { flex: 1; min-width: 0; overflow: hidden; mask-image: linear-gradient(to right, #000 80%, transparent); }
.bm-apps span { mask-image: none; }
.bm .bm-large { font-size: 15px; }
.quora { width: 16px; text-align: center; color: #a82400; font-family: "Liberation Serif", serif; font-size: 17px; }
.hva { width: 16px; height: 15px; background: #000; color: #fff; font-size: 7px; line-height: 15px; text-align: center; }
.more { margin-left: auto; color: #5a5a5a; font-size: 16px; font-weight: 700; }

/* Translate page */
.translate { flex: 1; display: flex; flex-direction: column; background: #fff; font-family: "Liberation Sans", Arial, sans-serif; color: #222; }
.g-head { display: flex; align-items: center; height: 60px; padding: 0 30px 0 29px; background: #f1f1f1; }
.logo { margin-right: auto; font-family: Roboto, sans-serif; font-size: 29px; font-weight: 500; }
.gb { color: #4285f4; } .gr { color: #ea4335; } .gy { color: #fbbc05; } .gg { color: #34a853; }
.signin { width: 94px; height: 30px; margin-left: 22px; border: 1px solid #4285f4; border-radius: 2px; background: linear-gradient(#4387fd, #4683ea); color: #fff; font-size: 13px; font-weight: 700; }
.g-title { display: flex; align-items: center; height: 58px; padding: 0 58px 0 28px; border-bottom: 1px solid #e5e5e5; }
.g-title h1 { flex: 1; font-size: 20px; color: #dd4b39; }
.g-title a { font-size: 12px; color: #777; }
.gbtn { display: flex; align-items: center; justify-content: center; width: 36px; height: 29px; padding: 0; border: 1px solid #dcdcdc; border-radius: 2px; background: linear-gradient(#f5f5f5, #f1f1f1); }
.phrasebook { margin-left: 24px; }
.work { display: grid; grid-template-columns: 1fr 1fr; column-gap: 8px; padding: 14px 58px 0 28px; }
.langs { display: flex; align-items: center; margin-bottom: 11px; }
.group { display: flex; border: 1px solid #dcdcdc; border-radius: 2px; background: linear-gradient(#f5f5f5, #f1f1f1); }
.group button { height: 27px; padding: 0 9px 0 8px; border: 0; border-right: 1px solid #dcdcdc; background: none; color: #444; font-size: 12px; font-weight: 700; }
.group button:last-child { border-right: 0; }
.group .on { background: linear-gradient(#eee, #e0e0e0); box-shadow: inset 0 1px 2px rgba(0, 0, 0, .1), 0 0 0 1px #ccc; color: #333; }
.group .drop { padding: 0 7px; color: #777; }
.swap { margin-left: auto; }
.go { width: 72px; height: 29px; margin-left: 16px; border: 1px solid #3079ed; border-radius: 2px; background: linear-gradient(#4d90fe, #4787ed); color: #fff; font-size: 11px; font-weight: 700; }
.box { display: flex; flex-direction: column; justify-content: space-between; height: 130px; }
.source { border: 1px solid #d9d9d9; border-top-color: #c0c0c0; }
.box-top { display: flex; align-items: flex-start; padding: 8px 9px 0 8px; }
.box-top textarea { flex: 1; height: 40px; border: 0; padding: 0; outline: 0; resize: none; font-size: 24px; line-height: 28px; }
.tools { display: flex; align-items: center; gap: 12px; height: 34px; padding: 0 11px; color: #777; }
.mic { width: 14px; height: 19px; }
.ehat { font-size: 20px; color: #666; }
.result { background: #f5f5f5; }
.out { padding: 11px 9px; font-family: "Noto Sans CJK JP", sans-serif; font-size: 24px; line-height: 32px; color: #4285f4; }
.result .tools { gap: 10px; padding: 0 11px 0 10px; }
.pale { color: #999; }
.copy { width: 16px; height: 18px; }
.adots { width: 26px; height: 26px; margin: 0 -4px 0 -4px; padding: 0; border: 1px solid #ccc; border-radius: 2px; background: #ebebeb; font-size: 18px; font-weight: 700; color: #111; }
.edits { display: flex; gap: 12px; margin-left: auto; font-size: 11px; font-weight: 700; color: #444; }
.edits button { gap: 4px; }
.undo { width: 15px; height: 10px; }
.translit { padding: 14px 8px; font-size: 13px; color: #777; }
.see { padding: 18px 36px; font-size: 13px; }
.see h2 { font-size: 16px; line-height: 26px; color: #777; }
.see a { line-height: 20px; }
.biz { display: flex; gap: 28px; margin: auto 0 12px 330px; font-size: 13px; line-height: 16px; color: #777; }
.biz span { margin-right: -14px; }
.biz a { color: #15c; }
.g-foot { display: flex; align-items: center; gap: 25px; height: 48px; padding: 0 28px; border-top: 1px solid #ccc; background: #eee; font-size: 12px; color: #777; }
.social { display: flex; align-items: center; gap: 26px; height: 32px; padding-left: 25px; border-left: 1px solid #ccc; }
.gplus { width: 24px; height: 16px; }
.foot-right { display: flex; align-items: center; gap: 25px; margin-left: auto; }
.feedback { gap: 7px; font-weight: 700; color: #333; }

/* Admin page */
.admin { flex: 1; display: flex; font-family: "Liberation Sans", Arial, sans-serif; background: #f1f1f1; }
.admin-main { flex: 1; display: flex; flex-direction: column; }
.navbar { display: flex; align-items: center; justify-content: space-between; height: 50px; padding: 0 25px 0 15px; background: #222; color: #fff; }
.brand { font-size: 16px; letter-spacing: 2px; }
.brand b { font-weight: 400; color: #30a5ff; }
.usermenu { gap: 7px; font-size: 15px; }
.admin-body { flex: 1; display: flex; background: #f1f4f7; }
aside { width: 50%; background: #fff; }
.side-search { display: block; width: calc(100% - 30px); height: 34px; margin: 20px 15px; padding: 0 12px; border: 1px solid #e4e4e4; border-radius: 4px; font-size: 14px; background: #fff; }
.side-search::placeholder { color: #aaa; }
aside ul { padding: 20px 0; border-top: 1px solid #e9e9e9; }
aside li a { display: flex; align-items: center; gap: 14px; height: 42px; padding: 0 15px; font-size: 15px; color: #5f6468; }
aside .active { background: #30a5ff; color: #fff; }
aside .open { background: #e9ecf2; color: #30a5ff; }
.scrollbar { display: flex; flex-direction: column; align-items: center; width: 15px; padding: 6px 0 5px; background: #f1f1f1; color: #444; }
.up { transform: rotate(180deg); color: #999; }
.thumb { width: 11px; flex: 1; margin: 5px 0 46px; background: #c1c1c1; }

/* Open File dialog */
.dialog { position: absolute; left: 92px; right: 92px; top: 33px; bottom: 54px; display: flex; flex-direction: column; border-radius: 7px 7px 0 0; background: #f2f1f0; color: #4c4c4c; font-size: 14px; box-shadow: 0 12px 48px rgba(0, 0, 0, .85); }
.titlebar { display: flex; align-items: center; gap: 4px; height: 28px; padding: 0 8px; border-radius: 7px 7px 0 0; background: linear-gradient(#5e5b50, #3c3b37); color: #dfdbd2; }
.titlebar strong { margin-left: 8px; font-size: 15px; }
.wm { display: flex; align-items: center; justify-content: center; width: 15px; height: 15px; padding: 0; border: 1px solid #35342f; border-radius: 50%; background: linear-gradient(#85837b, #5f5d56); }
.wm svg { width: 7px; height: 7px; }
.wm-close { background: linear-gradient(#f88a66, #df4b16); }
.d-body { flex: 1; display: flex; flex-direction: column; padding: 13px 12px; }
.path { display: flex; gap: 2px; margin-bottom: 13px; }
.gtk { display: flex; align-items: center; justify-content: center; gap: 2px; height: 31px; padding: 0 7px; border: 1px solid #b9b5b0; border-radius: 4px; background: linear-gradient(#fff, #ececeb); color: #4c4c4c; }
.edit { width: 26px; padding: 0; margin: 0 12px 0 1px; }
.prev { width: 22px; padding: 0; }
.home { padding: 0 6px 0 5px; gap: 3px; }
.tri { width: 5px; height: 8px; }
.pressed { background: #dddcda; font-weight: 700; }
.panes { flex: 1; display: flex; }
.places-col { display: flex; flex-direction: column; width: 148px; }
.places { flex: 1; border: 1px solid #bdb9b4; background: #fff; }
.th, th { height: 25px; padding: 0 4px; border-bottom: 1px solid #aaa6a2; background: linear-gradient(#fff, #eeedec); line-height: 24px; font-weight: 400; text-align: left; }
th { padding: 0 5px; }
.places ul { padding: 0 2px; }
.places ul + ul { margin: 1px 1px 0; padding: 2px 1px 0; border-top: 1px solid #dededd; }
.places li { display: flex; align-items: center; gap: 4px; height: 23px; color: #3c3c3c; white-space: nowrap; }
.addrow { display: flex; gap: 18px; padding: 11px 10px 9px; }
.grip { display: flex; flex-direction: column; align-items: center; justify-content: center; gap: 2px; width: 6px; padding-bottom: 2px; }
.grip i { width: 4px; height: 1px; background: #bbb; }
.files-col { flex: 1; display: flex; flex-direction: column; }
.files { flex: 1; border: 1px solid #bdb9b4; background: #fde6de; }
table { width: 100%; border-collapse: collapse; }
th + th { border-left: 1px solid #cfccc8; }
.c-name span { display: flex; align-items: center; justify-content: space-between; padding-right: 4px; }
.sort { width: 8px; height: 5px; }
.c-size { width: 37px; }
.c-mod { width: 101px; }
.filter { position: relative; align-self: flex-end; margin: 7px 1px 0 0; }
.filter select { width: 123px; height: 29px; padding: 0 6px; border: 1px solid #b0aca7; border-radius: 4px; background: linear-gradient(#fff, #ececeb); appearance: none; }
.updown { position: absolute; right: 8px; top: 8px; width: 6px; height: 13px; }
.actions { display: flex; justify-content: flex-end; gap: 8px; margin: 14px 1px 0; }
.actions .gtk { width: 83px; height: 27px; }
.actions .primary { border-color: #b4776a; background: linear-gradient(#ffae8f, #f58f68); }

/* Launcher */
.dock { position: relative; z-index: 2; display: flex; gap: 7px; height: 64px; padding: 6px; box-shadow: inset 0 1px rgba(60, 60, 30, .8); background: linear-gradient(rgba(0, 0, 0, .35), transparent 12px), radial-gradient(ellipse 160px 90px at 64% 20%, #8b8716, transparent), radial-gradient(ellipse 130px 80px at 87% 60%, #8a8613, transparent), radial-gradient(ellipse 60px 90px at 97% 40%, #6d6426, transparent), linear-gradient(to right, #7a7c14, #5d650e 12%, #5b610e 45%, #6d7512 60%, #7f8015 80%, #6f6a10); }
.screen-right .dock { background: linear-gradient(rgba(30, 26, 0, .45), transparent 14px), rgba(88, 80, 16, .66); }
.tile { position: relative; width: 52px; height: 52px; padding: 0; border: 1px solid rgba(255, 255, 255, .25); border-radius: 4px; background: linear-gradient(rgba(255, 255, 255, .25), rgba(255, 255, 255, .08)); box-shadow: 0 1px 2px rgba(0, 0, 0, .5); }
.tile svg { width: 50px; height: 50px; }
.tile:first-child { background: #8f8b2b; }
.tile.t-gold { background: linear-gradient(#bda05a, #a88a2b); }
.tile.t-grey { background: linear-gradient(#c2c3bb, #a7a8a0); }
.tile.t-green { background: linear-gradient(#97cb5f, #6eaa33); }
.last { margin-left: auto; }
.run::after, .run2::after { content: ""; position: absolute; left: 21px; bottom: -7px; border: 4px solid transparent; border-top: 0; border-bottom: 5px solid #ddd; }
.run2::after { border: 0; width: 8px; height: 5px; background: linear-gradient(to right, #ddd 3px, transparent 3px 5px, #ddd 5px); }
.here::before { content: ""; position: absolute; left: 21px; top: -7px; border: 4px solid transparent; border-bottom: 0; border-top: 5px solid #aaa; }
```
